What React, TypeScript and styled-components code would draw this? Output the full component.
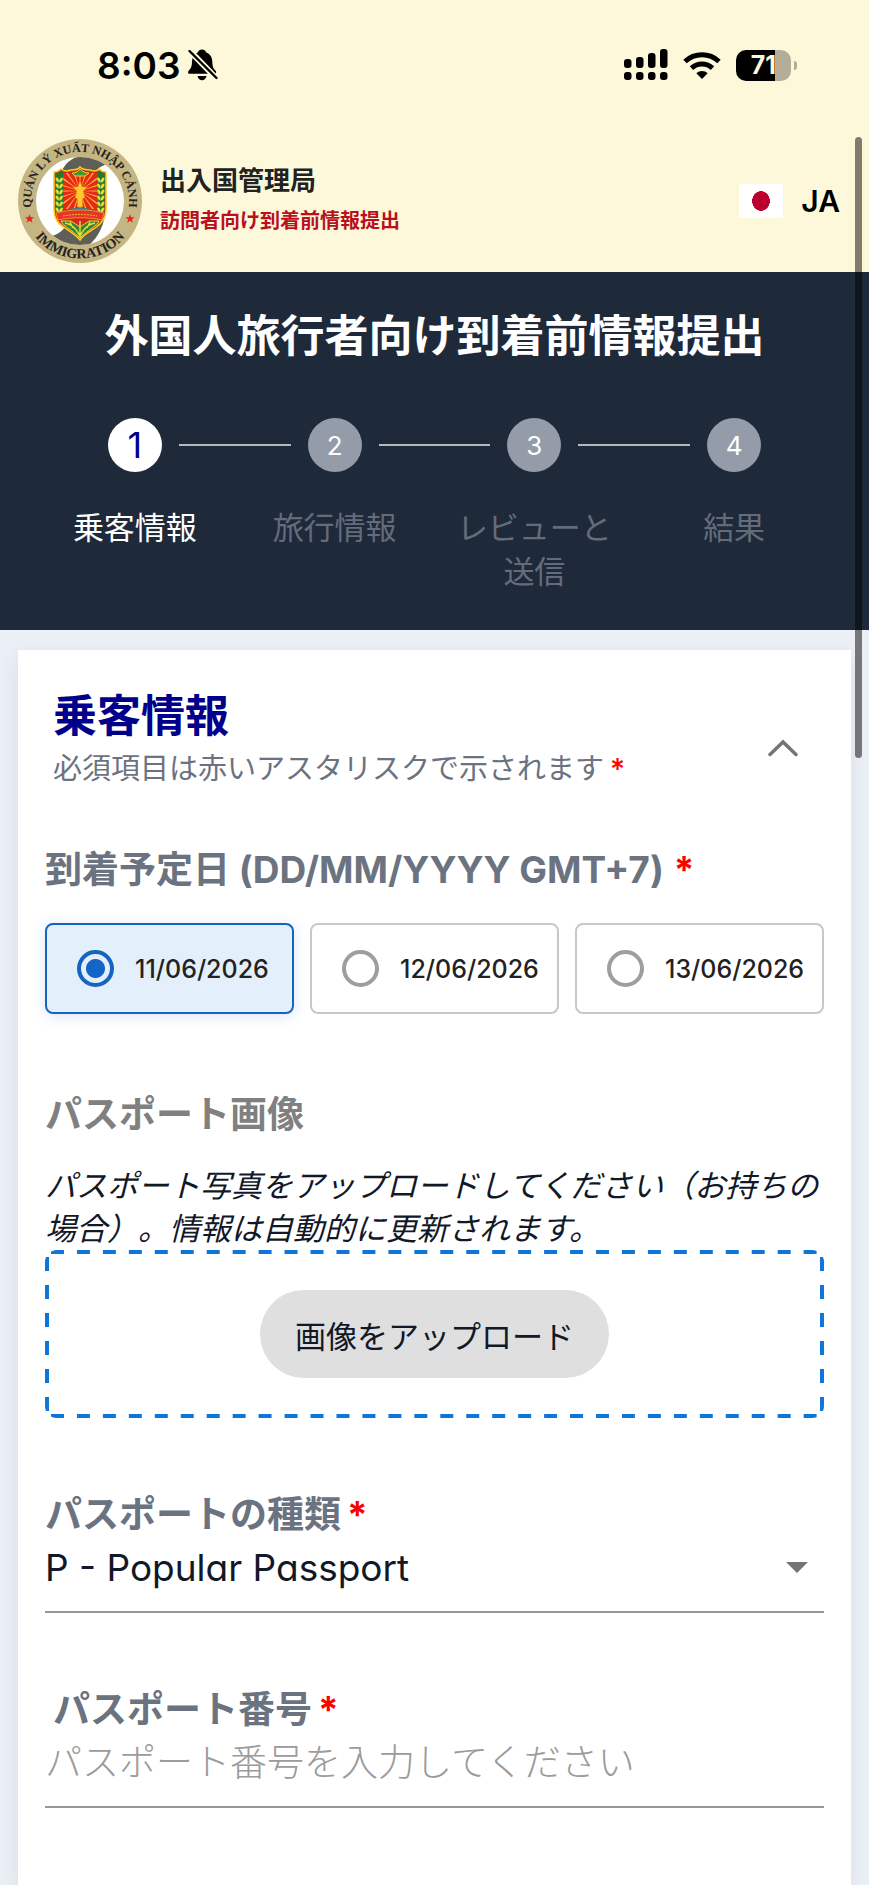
import React, { useState } from "react";
import styled, { createGlobalStyle, css } from "styled-components";

const dates = ["11/06/2026", "12/06/2026", "13/06/2026"];

const steps = ["乗客情報", "旅行情報", "レビューと送信", "結果"];

const rays = Array.from({ length: 20 }, (_, i) => i * 18);
const grains = [0, 1, 2, 3, 4, 5];

const BellOff = () => (
  <svg width="30" height="32" viewBox="0 0 30 32" aria-hidden="true">
    <path d="M14 0.5c2.2 0 3.6 1.2 4 2.7 4 1.500 6.200 5 6.300 9.300.1 5 1 7 3.300 9.300 1 1 .6 3-1.100 3H2c-2 0-2.600-1.800-1.300-3.100C3 19.300 3.900 17.500 4 12.500 4.200 8 6.200 4.700 10 3.200 10.400 1.700 11.800.5 14 .5z" />
    <path d="M9.500 27h9c-.5 2.600-2.200 4.200-4.500 4.200S10 29.600 9.500 27z" />
    <path d="M-1 -1L30 31" stroke="#fef8db" strokeWidth="6" />
    <path d="M1.500 2L28.500 29" stroke="#000" strokeWidth="2.400" strokeLinecap="round" />
  </svg>
);

const Signal = () => (
  <svg width="44" height="32" viewBox="0 0 44 32" aria-hidden="true">
    <rect x="0" y="10" width="7.500" height="9" rx="3" />
    <rect x="12" y="8" width="7.500" height="11" rx="3" />
    <rect x="24" y="4" width="7.500" height="15" rx="3" />
    <rect x="36" y="0" width="7.500" height="19" rx="3" />
    <rect x="0" y="23" width="7.500" height="8" rx="3" />
    <rect x="12" y="23" width="7.500" height="8" rx="3" />
    <rect x="24" y="23" width="7.500" height="8" rx="3" />
    <rect x="36" y="23" width="7.500" height="8" rx="3" />
  </svg>
);

const Wifi = () => (
  <svg width="38" height="28" viewBox="0 0 38 28" aria-hidden="true">
    <path d="M2 10.500a25 25 0 0 1 34 0" fill="none" stroke="#000" strokeWidth="5" />
    <path d="M8.500 17.200a15.500 15.500 0 0 1 21 0" fill="none" stroke="#000" strokeWidth="5" />
    <path d="M13.300 22.200a8.500 8.500 0 0 1 11.400 0L19 28z" />
  </svg>
);

const Emblem = () => (
  <svg width="124" height="124" viewBox="0 0 124 124" role="img" aria-label="Immigration">
    <defs>
      <path id="arcTop" d="M13.600 69.500A49 49 0 1 1 110.400 69.500" />
      <path id="arcBottom" d="M4.500 62A57.500 57.500 0 0 0 119.500 62" />
      <clipPath id="disc">
        <circle cx="62" cy="62" r="44" />
      </clipPath>
      <clipPath id="field">
        <path d="M45 34h35v36H45z" />
      </clipPath>
    </defs>
    <circle cx="62" cy="62" r="62" fill="#c5b583" />
    <circle cx="62" cy="62" r="44" fill="#fff" />
    <g clipPath="url(#disc)" fill="#5f5e57">
      <path d="M42 36C46 26 51 20 62 17c14-2 22 3 28 8-9 2-15 8-17 16L50 46z" />
      <path d="M34 97c8-2 14-8 18-18l36-8c-2 16-8 28-18 36-14 2-26-1-36-10z" />
    </g>
    <path
      d="M36 33c3 0 5-1 7-3 3 3 7 2 10 1 4 0 7 0 9-3 3 3 6 3 10 3 3 1 7 2 9-1 2 2 4 3 7 3v37c0 9-4 14-11 19-6 4-12 7-15 12-4-5-9-8-15-12-8-5-11-10-11-19z"
      fill="#d7261b"
      stroke="#f5d11c"
      strokeWidth="1.500"
    />
    <path d="M37 35l6-3 3 3v35l-8 3zM87 35l-6-3-3 3v35l8 3z" fill="#1f7a34" />
    <g clipPath="url(#field)">
      <path d="M45 34h35v36H45z" fill="#e8281d" />
      {rays.map((deg) => (
        <path key={deg} d="M62 52L61.100 22h1.800z" fill="#ffd22b" transform={`rotate(${deg} 62 52)`} />
      ))}
    </g>
    <path d="M54 34c3 0 6-1 8-4 3 3 6 4 9 4l-4 3H57z" fill="#3c9a35" stroke="#f5d11c" />
    <g fill="#e9e23a" stroke="#2c7a2c" strokeWidth=".5">
      {grains.map((n) => (
        <g key={n}>
          <ellipse cx="39.500" cy={41 + n * 6} rx="1.600" ry="3" transform={`rotate(-30 39.500 ${41 + n * 6})`} />
          <ellipse cx="43" cy={41 + n * 6} rx="1.600" ry="3" transform={`rotate(30 43 ${41 + n * 6})`} />
          <ellipse cx="81" cy={41 + n * 6} rx="1.600" ry="3" transform={`rotate(-30 81 ${41 + n * 6})`} />
          <ellipse cx="84.500" cy={41 + n * 6} rx="1.600" ry="3" transform={`rotate(30 84.500 ${41 + n * 6})`} />
        </g>
      ))}
    </g>
    <path d="M62 42l2.200 6h5l-4 4 1.500 6-2.200 2v8h-5v-8l-2.200-2 1.500-6-4-4h5z" fill="#ffc92e" stroke="#e98b17" strokeWidth=".6" />
    <path d="M50 71c5-3 19-3 24 0l3 3c-8-3-22-3-30 0z" fill="#2d7f98" />
    <path d="M38 74c14-4 34-4 48 0l-2 7c-12-3-32-3-44 0z" fill="#e6352a" stroke="#f7b52b" strokeWidth=".7" />
    <path d="M45 77c10-2 24-2 34 0" stroke="#f7b52b" strokeDasharray="2 1" fill="none" />
    <path d="M43 82l10 0 9 6 9-6 10 0c-2 5-10 8-19 17-9-9-17-12-19-17z" fill="#31853a" stroke="#f1d82b" />
    <path d="M47 84c6 1 10 4 15 13 5-9 9-12 15-13M52 83l3 6M72 83l-3 6M62 82v16" fill="none" stroke="#e7dc35" strokeWidth="1.500" />
    <path d="M12 74.500l1 2.700h2.900l-2.300 1.800.9 2.800-2.500-1.700-2.500 1.700.9-2.800-2.300-1.800H11z" fill="#e52420" transform="translate(-2.500 -12) scale(1.170)" />
    <path d="M112 74.500l1 2.700h2.900l-2.300 1.800.9 2.800-2.500-1.700-2.500 1.700.9-2.800-2.300-1.800h2.900z" fill="#e52420" transform="translate(-19 -12) scale(1.170)" />
    <RingText $size={12}>
      <textPath href="#arcTop" startOffset="50%" textAnchor="middle">
        QUẢN LÝ XUẤT NHẬP CẢNH
      </textPath>
    </RingText>
    <RingText $size={14}>
      <textPath href="#arcBottom" startOffset="50%" textAnchor="middle">
        IMMIGRATION
      </textPath>
    </RingText>
  </svg>
);

const App = () => {
  const [arrival, setArrival] = useState(dates[0]);
  const [open, setOpen] = useState(true);

  return (
    <Page>
      <GlobalStyle />
      <StatusBar>
        <StatusGroup>
          <Clock>8:03</Clock>
          <BellOff />
        </StatusGroup>
        <StatusIcons>
          <Signal />
          <Wifi />
          <Battery>
            <BatteryBody>71</BatteryBody>
            <BatteryTip />
          </Battery>
        </StatusIcons>
      </StatusBar>

      <Header>
        <Emblem />
        <Brand>
          <BrandName>出入国管理局</BrandName>
          <BrandNote>訪問者向け到着前情報提出</BrandNote>
        </Brand>
        <Language type="button">
          <Flag />
          JA
        </Language>
      </Header>

      <Banner>
        <BannerTitle>外国人旅行者向け到着前情報提出</BannerTitle>
        <Stepper>
          {steps.map((label, i) => (
            <Step key={label}>
              <StepTrack>
                <StepLine $hidden={i === 0} />
                <StepNumber $active={i === 0}>{i + 1}</StepNumber>
                <StepLine $hidden={i === steps.length - 1} />
              </StepTrack>
              <StepLabel $active={i === 0}>{label}</StepLabel>
            </Step>
          ))}
        </Stepper>
      </Banner>

      <Card>
        <CardHeader>
          <CardHeading>
            <CardTitle>乗客情報</CardTitle>
            <CardNote>
              必須項目は赤いアスタリスクで示されます<Required>*</Required>
            </CardNote>
          </CardHeading>
          <Collapse type="button" aria-label="乗客情報" aria-expanded={open} onClick={() => setOpen(!open)}>
            <svg width="30" height="18" viewBox="0 0 30 18" aria-hidden="true">
              <path d="M2 15.500L15 3l13 12.500" fill="none" stroke="#757575" strokeWidth="3.500" strokeLinecap="round" />
            </svg>
          </Collapse>
        </CardHeader>

        {open && (
          <Form>
            <Dates>
              <Legend>
                到着予定日 (DD/MM/YYYY GMT+7)<Required>*</Required>
              </Legend>
              <DateRow>
                {dates.map((date) => (
                  <DateOption key={date} $checked={arrival === date}>
                    <Radio name="arrival" value={date} checked={arrival === date} onChange={() => setArrival(date)} />
                    {date}
                  </DateOption>
                ))}
              </DateRow>
            </Dates>

            <Section>
              <SectionTitle>パスポート画像</SectionTitle>
              <Hint>パスポート写真をアップロードしてください（お持ちの場合）。情報は自動的に更新されます。</Hint>
              <DropZone>
                <UploadButton type="button">画像をアップロード</UploadButton>
              </DropZone>
            </Section>

            <Section>
              <FieldLabel htmlFor="passportType">
                パスポートの種類<Required>*</Required>
              </FieldLabel>
              <SelectBox>
                <Select id="passportType">
                  <option>P - Popular Passport</option>
                </Select>
                <Caret />
              </SelectBox>
            </Section>

            <Section>
              <FieldLabel htmlFor="passportNumber" $indent>
                パスポート番号<Required>*</Required>
              </FieldLabel>
              <TextInput id="passportNumber" placeholder="パスポート番号を入力してください" />
            </Section>
          </Form>
        )}
      </Card>
      <ScrollThumb />
    </Page>
  );
};

export default App;

const GlobalStyle = createGlobalStyle`
  * {
    box-sizing: border-box;
  }

  body {
    margin: 0;
    background: #ebeff6;
    color: #111827;
    font-family: Inter, "Noto Sans CJK JP", sans-serif;
    text-spacing-trim: space-all;
  }

  button, input, select {
    font-family: inherit;
    color: inherit;
  }
`;

const RingText = styled.text<{ $size: number }>`
  font-family: "Liberation Serif", serif;
  font-size: ${({ $size }) => $size}px;
  font-weight: 700;
  fill: #24231f;
`;

const Page = styled.div`
  position: relative;
  display: flex;
  flex-direction: column;
  min-height: 100vh;
  overflow: hidden;
`;

const StatusBar = styled.div`
  display: flex;
  align-items: center;
  justify-content: space-between;
  height: 130px;
  padding: 0 72px 0 97px;
  background: #fef8db;
  color: #000000;
`;

const StatusGroup = styled.div`
  display: flex;
  align-items: center;
  gap: 8px;
`;

const StatusIcons = styled.div`
  display: flex;
  align-items: center;
  gap: 15px;
`;

const Clock = styled.span`
  font-size: 37px;
  font-weight: 600;
`;

const Battery = styled.div`
  display: flex;
  align-items: center;
  gap: 3px;
`;

const BatteryBody = styled.div`
  width: 55px;
  height: 31px;
  border-radius: 10px;
  background: linear-gradient(to right, #000000 71%, #b4ae99 71%);
  color: #fef8db;
  font-size: 25px;
  font-weight: 700;
  line-height: 31px;
  text-align: center;
`;

const BatteryTip = styled.div`
  width: 3px;
  height: 9px;
  border-radius: 0 4px 4px 0;
  background: #b4ae99;
`;

const Header = styled.header`
  display: flex;
  align-items: center;
  height: 142px;
  padding: 0 29px 0 18px;
  background: #fef8db;
`;

const Brand = styled.div`
  flex: 1;
  margin-left: 18px;
`;

const BrandName = styled.div`
  font-size: 26px;
  font-weight: 700;
  line-height: 40px;
  color: #20231f;
`;

const BrandNote = styled.div`
  font-size: 20px;
  font-weight: 700;
  line-height: 40px;
  color: #b90f1e;
`;

const Language = styled.button`
  display: flex;
  align-items: center;
  gap: 18px;
  padding: 0;
  border: 0;
  background: none;
  color: #000000;
  font-size: 30px;
  font-weight: 600;
`;

const Flag = styled.span`
  width: 44px;
  height: 34px;
  background: radial-gradient(9px 10px, #bc002d 96%, #ffffff 100%);
`;

const Banner = styled.section`
  padding: 34px 35px 36px;
  background: #1e293a;
  color: #ffffff;
`;

const BannerTitle = styled.h1`
  margin: 0 0 52px;
  font-size: 44px;
  font-weight: 700;
  line-height: 60px;
  text-align: center;
`;

const Stepper = styled.ol`
  display: grid;
  grid-template-columns: repeat(4, 1fr);
  margin: 0;
  padding: 0;
  list-style: none;
`;

const Step = styled.li`
  display: flex;
  flex-direction: column;
  gap: 34px;
`;

const StepTrack = styled.div`
  display: flex;
  align-items: center;
  gap: 17px;
`;

const StepLine = styled.div<{ $hidden: boolean }>`
  flex: 1;
  height: 2px;
  background: ${({ $hidden }) => ($hidden ? "transparent" : "#b4b9c0")};
`;

const StepNumber = styled.span<{ $active: boolean }>`
  display: grid;
  place-items: center;
  width: 54px;
  height: 54px;
  border-radius: 50%;
  background: #949ca9;
  font-size: 26px;

  ${({ $active }) =>
    $active &&
    css`
      background: #ffffff;
      color: #00008b;
      font-size: 36px;
    `}
`;

const StepLabel = styled.span<{ $active: boolean }>`
  padding: 0 20px;
  font-size: 31px;
  line-height: 44px;
  text-align: center;
  color: ${({ $active }) => ($active ? "#ffffff" : "#646c7b")};
`;

const Card = styled.main`
  flex: 1;
  margin: 20px 18px 0;
  padding: 39px 27px 75px;
  background: #ffffff;
  box-shadow: 0 6px 20px rgba(30, 41, 58, 0.08);
`;

const CardHeader = styled.div`
  display: flex;
  align-items: center;
  justify-content: space-between;
  padding: 0 14px 0 8px;
`;

const CardHeading = styled.div`
  padding-bottom: 12px;
`;

const CardTitle = styled.h2`
  margin: 0;
  font-size: 44px;
  font-weight: 700;
  line-height: 54px;
  color: #00008b;
`;

const Required = styled.span`
  margin-left: 6px;
  color: #ff0000;
`;

const CardNote = styled.p`
  margin: 0;
  font-size: 29px;
  line-height: 52px;
  color: #6b7280;

  ${Required} {
    font-weight: 500;
  }
`;

const Collapse = styled.button`
  display: grid;
  place-items: center;
  width: 54px;
  height: 54px;
  padding: 0;
  border: 0;
  background: none;
`;

const Form = styled.form`
  margin-top: 36px;
`;

const Dates = styled.fieldset`
  min-width: 0;
  margin: 0 0 74px;
  padding: 0;
  border: 0;
`;

const labelText = css`
  font-size: 37px;
  font-weight: 700;
  line-height: 54px;
  color: #6b7280;
`;

const Legend = styled.legend`
  padding: 0;
  ${labelText}

  ${Required} {
    margin-left: 10px;
  }
`;

const DateRow = styled.div`
  display: grid;
  grid-template-columns: repeat(3, 1fr);
  gap: 16px;
  margin-top: 26px;
`;

const DateOption = styled.label<{ $checked: boolean }>`
  display: flex;
  align-items: center;
  gap: 21px;
  height: 91px;
  padding-left: 30px;
  border: 2px solid #c8c8c8;
  border-radius: 8px;
  font-size: 25px;
  font-weight: 500;
  color: #222222;

  ${({ $checked }) =>
    $checked &&
    css`
      border-color: #1565c0;
      background: #e3f0fb;
      box-shadow: 0 2px 14px rgba(21, 101, 192, 0.16);
    `}
`;

const Radio = styled.input.attrs({ type: "radio" })`
  appearance: none;
  flex: none;
  width: 37px;
  height: 37px;
  margin: 0;
  border: 4px solid #9e9e9e;
  border-radius: 50%;

  &:checked {
    border-color: #1565c0;
    background: radial-gradient(circle, #1565c8 9px, transparent 10px);
  }
`;

const Section = styled.section`
  & + & {
    margin-top: 70px;
  }
`;

const SectionTitle = styled.h3`
  ${labelText}
  margin: 0 0 22px;
  color: #808080;
`;

const Hint = styled.p`
  margin: 0;
  font-size: 31px;
  font-style: italic;
  line-height: 43px;
`;

/* long dashes, one gradient per side */
const DropZone = styled.div`
  --dash: transparent 25%, #0e76d8 25% 75%, transparent 75%;
  display: flex;
  justify-content: center;
  padding: 40px 0;
  border-radius: 12px;
  background-image: linear-gradient(90deg, var(--dash)), linear-gradient(90deg, var(--dash)),
    linear-gradient(var(--dash)), linear-gradient(var(--dash));
  background-size: 26px 4px, 26px 4px, 4px 26px, 4px 26px;
  background-position: 0 0, 0 100%, 0 0, 100% 0;
  background-repeat: round no-repeat, round no-repeat, no-repeat round, no-repeat round;
`;

const UploadButton = styled.button`
  height: 88px;
  padding: 0 35px;
  border: 0;
  border-radius: 44px;
  background: #dfdfdf;
  font-size: 31px;
`;

const FieldLabel = styled.label<{ $indent?: boolean }>`
  display: block;
  padding-left: ${({ $indent }) => ($indent ? "8px" : "0")};
  ${labelText}
`;

const SelectBox = styled.div`
  position: relative;
`;

const fieldBox = css`
  display: block;
  width: 100%;
  height: 71px;
  padding: 0 0 19px;
  border: 0;
  border-bottom: 2px solid #979797;
  border-radius: 0;
  outline: 0;
  background: none;
  font-size: 37px;
`;

const Select = styled.select`
  appearance: none;
  font-feature-settings: "cv11";
  ${fieldBox}
`;

const Caret = styled.span`
  position: absolute;
  top: 20px;
  right: 16px;
  border: 11px solid transparent;
  border-top-color: #757575;
  border-bottom: 0;
  pointer-events: none;
`;

const TextInput = styled.input`
  ${fieldBox}

  &::placeholder {
    color: #9b9b9b;
    font-weight: 300;
    opacity: 1;
  }
`;

const ScrollThumb = styled.div`
  position: absolute;
  top: 137px;
  right: 7px;
  width: 7px;
  height: 621px;
  border-radius: 4px;
  background: rgba(0, 0, 0, 0.5);
`;
